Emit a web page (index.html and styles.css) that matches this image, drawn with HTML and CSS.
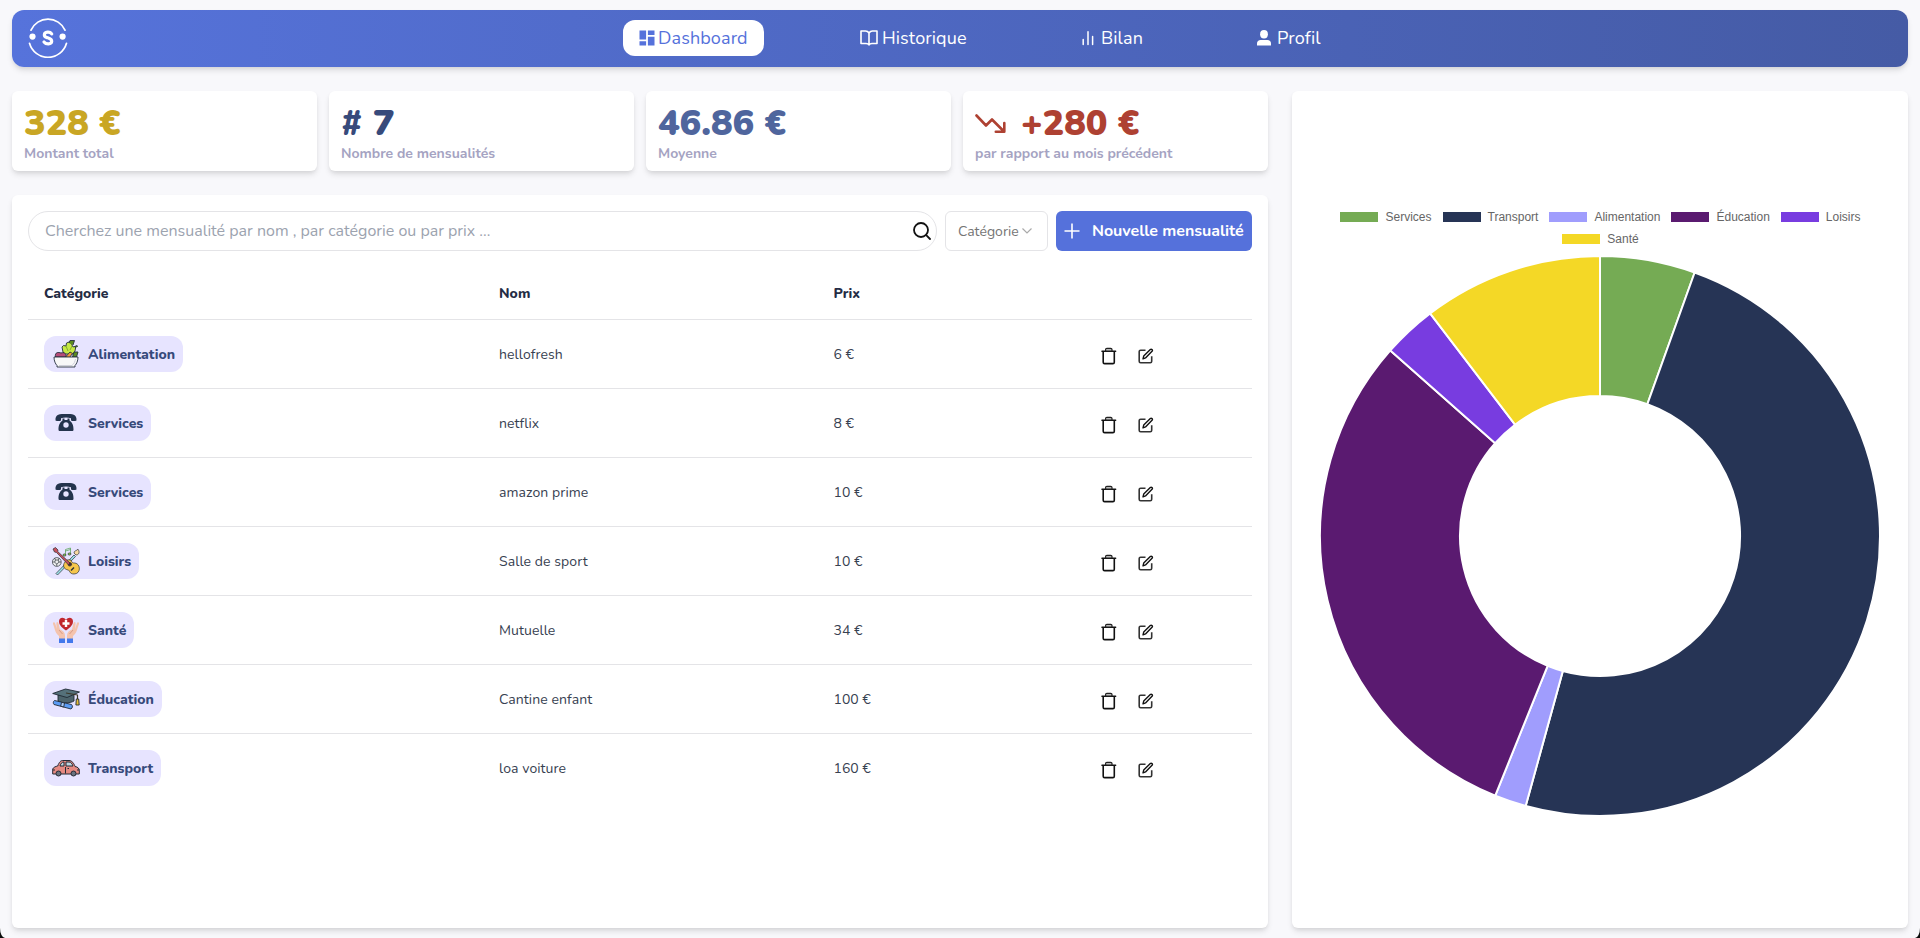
FILE: index.html
```html
<!DOCTYPE html>
<html lang="fr">
<head>
<meta charset="utf-8">
<title>Dashboard</title>
<link rel="stylesheet" href="styles.css">
</head>
<body>
<svg class="sprite" width="0" height="0">
  <symbol id="trash" viewBox="0 0 16 18"><path d="M2.200 4.500v10.700c0 .9.500 1.400 1.400 1.400h8.300c.9 0 1.400-.5 1.400-1.400V4.500M1 4.300h13.600" fill="none" stroke="currentColor" stroke-width="1.600" stroke-linecap="round"/><path d="M4.600 4V2.600c0-.8.5-1.300 1.300-1.300h3.800c.8 0 1.300.5 1.300 1.300V4z" fill="#bbb" stroke="#222" stroke-width="1.200"/></symbol>
  <symbol id="edit" viewBox="0 0 16 16"><path d="M7.500 2.200H2.600c-.8 0-1.400.6-1.400 1.400v9.700c0 .8.600 1.400 1.400 1.400h9.700c.8 0 1.400-.6 1.400-1.400V8.300" fill="none" stroke="#333" stroke-width="1.600"/><path d="M5 10.900l.7-2.800 6.600-6.500c.5-.5 1.200-.5 1.700 0s.5 1.200 0 1.700L7.500 9.900z" fill="none" stroke="currentColor" stroke-width="1.400" stroke-linejoin="round"/></symbol>
  <symbol id="phone" viewBox="0 0 28 28"><path d="M3.500 11.500C3 5 8 5 14 5s11 0 10.500 6.500c-1.500.7-4 .7-5.500 0V9.300c-3-1-7-1-10 0v2.200c-1.500.7-4 .7-5.500 0z" fill="#24344d"/><path d="M10.500 9.500h2V11h3V9.500h2v2c3.500 2.500 4 6 4 9 0 1-.5 1.500-1.500 1.500H8c-1 0-1.500-.5-1.500-1.500 0-3 .5-6.500 4-9z" fill="#24344d"/><circle cx="14" cy="16" r="2.700" fill="#e7e4ff"/></symbol>
</svg>

<header class="topbar">
  <svg class="logo" viewBox="0 0 40 40" fill="none" stroke="#fff" stroke-width="1.700" stroke-linecap="round"><path d="M3 12.200a18.600 18.600 0 0 1 34 0M1.500 25.300a19.200 19.200 0 0 0 37 0"/><circle cx="4.500" cy="18.600" r="3.100" fill="#fff" stroke="none"/><circle cx="34.600" cy="18.600" r="3.100" fill="#fff" stroke="none"/><path d="M23.700 15.900c-1-1.400-2.700-1.900-4.300-1.700-3.800.5-4 4.100-.8 5.200 2.100.7 5.300 1 5.100 3.900-.3 3.200-5.500 3.300-7.700.6" stroke-width="3.200"/></svg>
  <nav class="nav">
    <a class="nav-item active"><svg viewBox="0 0 16 16" fill="currentColor"><path d="M.5.500h6.600v9H.5zM8.900.500h6.600v4.500H8.900zM8.900 6.800h6.600v8.700H8.900zM.5 11.200h6.600v4.300H.5z"/></svg><span>Dashboard</span></a>
    <a class="nav-item history"><svg viewBox="0 0 18 16" fill="none" stroke="currentColor" stroke-width="1.600" stroke-linejoin="round"><path d="M9 3c-.8-1.300-2-2-3.500-2H1v12.500h5c1.500 0 2.500.5 3 1.500.5-1 1.500-1.500 3-1.500h5V1h-4.500C11 1 9.800 1.700 9 3zV15"/></svg><span>Historique</span></a>
    <a class="nav-item report"><svg viewBox="0 0 12 16" fill="none" stroke="currentColor" stroke-width="1.500" stroke-linecap="round"><path d="M1.200 9.500v5M6 1.800v12.700M10.600 6.500v8"/></svg><span>Bilan</span></a>
    <a class="nav-item profile"><svg viewBox="0 0 14 16" fill="currentColor"><ellipse cx="7" cy="4.300" rx="3.900" ry="4.200"/><path d="M0 15.500v-2.200c0-2 1.600-3.300 3.500-3.300h7c2 0 3.500 1.300 3.500 3.300v2.200z"/></svg><span>Profil</span></a>
  </nav>
</header>

<main class="layout">
  <div class="main-col">
    <section class="stats">
      <article class="card stat"><strong class="gold">328 €</strong><span>Montant total</span></article>
      <article class="card stat"><strong class="navy"># 7</strong><span>Nombre de mensualités</span></article>
      <article class="card stat"><strong class="blue">46.86 €</strong><span>Moyenne</span></article>
      <article class="card stat"><strong class="red"><svg viewBox="0 0 32 20" fill="none" stroke="currentColor" stroke-width="2.600" stroke-linecap="round" stroke-linejoin="round"><path d="M1.500 1.500l9.500 10L17 5.500l12 12M29.300 9v8.700h-8.500"/></svg>+280 €</strong><span>par rapport au mois précédent</span></article>
    </section>

    <section class="card panel">
      <div class="toolbar">
        <div class="search"><span>Cherchez une mensualité par nom , par catégorie ou par prix ...</span><svg viewBox="0 0 18 18" fill="none" stroke="#111" stroke-width="1.800" stroke-linecap="round"><circle cx="8" cy="8" r="7"/><path d="M13.200 13.200l3.800 3.800"/></svg></div>
        <div class="select"><span>Catégorie</span><svg viewBox="0 0 10 6" fill="none" stroke="#aaa" stroke-width="1.200"><path d="M.5.500L5 5 9.500.5"/></svg></div>
        <button class="add"><svg viewBox="0 0 16 16" stroke="#fff" stroke-width="1.600"><path d="M8 .5v15M.5 8h15"/></svg><span>Nouvelle mensualité</span></button>
      </div>
      <div class="table">
        <div class="row head"><span>Catégorie</span><span>Nom</span><span>Prix</span><span></span></div>
        <div class="row"><div><span class="tag"><svg viewBox="0 0 28 28" stroke="#26303f" stroke-width=".9" stroke-linejoin="round"><path d="M11 12l-1-5 1.500-1.500L14 6l.5-3L17 2l2 1 2 4 3-1-1 5-2 3h-8z" fill="#c5e845"/><path d="M17 3l1-2.500 4.500 0L21 5M23 8l1.500-2.500 1.500 1M22 12l4 0-1.500 5h-4z" fill="#5a8a20"/><path d="M14 6l2 5M20 6l-2 4" fill="none" stroke="#7ea52a"/><path d="M3.500 17c-1-5 3-5 5.500-4 3-1 5.500 0 5 4z" fill="#b64b78"/><path d="M13.500 17l4.500-5 2.500 1.500-3 4z" fill="#f39a3a"/><path d="M2 17h24c0 4-1.500 7-3 8.500V27H5v-1.500C3.500 24 2 21 2 17z" fill="#f8f8f8"/><path d="M7 25.500h13c2-1.500 3-4 3.500-6.500" fill="none" stroke="#c9cbd5"/></svg>Alimentation</span></div><span>hellofresh</span><span>6 €</span><div class="actions"><svg class="trash"><use href="#trash"/></svg><svg class="edit"><use href="#edit"/></svg></div></div>
        <div class="row"><div><span class="tag"><svg><use href="#phone"/></svg>Services</span></div><span>netflix</span><span>8 €</span><div class="actions"><svg class="trash"><use href="#trash"/></svg><svg class="edit"><use href="#edit"/></svg></div></div>
        <div class="row"><div><span class="tag"><svg><use href="#phone"/></svg>Services</span></div><span>amazon prime</span><span>10 €</span><div class="actions"><svg class="trash"><use href="#trash"/></svg><svg class="edit"><use href="#edit"/></svg></div></div>
        <div class="row"><div><span class="tag"><svg viewBox="0 0 28 28" stroke="#2b3038" stroke-width=".7" stroke-linejoin="round"><path d="M4 26.500L22 8l1.500 1.500L5.500 28z" fill="#9be0e8"/><path d="M22 6c0-2.500 2.500-2 4-3.800C28 5 27 8 24 8z" fill="#f8d9a0"/><circle cx="4.800" cy="15" r="4.400" fill="#eee"/><path d="M3.500 13h2.700l.8 2.300-2.200 1.600-2.200-1.600zM1 15h1.500M7 15h2M4.800 17v2M3.500 13l-1-2M6.200 13l1-2" fill="none"/><path d="M13.500 8V2.500l5-1.500v6M13.500 4l5-1.500" fill="none" stroke="#4c9d47"/><ellipse cx="12.500" cy="8" rx="1.500" ry="1.100" fill="#8bd04a"/><ellipse cx="17.500" cy="7" rx="1.500" ry="1.100" fill="#8bd04a"/><path d="M13 15c2-3 4-2 6-2 1 3 2 3 4 3 6 1 6 11-1 11-5 0-4-4-6-4-4-1-6-4-3-8z" fill="#f6c64b"/><circle cx="17.800" cy="17.300" r="1.800" fill="#4a3032"/><path d="M1 2l2.500-1.500 2.500 2.500-.3 1.500L18 16l-1.700 1.700L4.500 5.500 2.500 5z" fill="#c8505c"/><path d="M19 23.500l3-3" stroke-width="1.400"/></svg>Loisirs</span></div><span>Salle de sport</span><span>10 €</span><div class="actions"><svg class="trash"><use href="#trash"/></svg><svg class="edit"><use href="#edit"/></svg></div></div>
        <div class="row"><div><span class="tag"><svg viewBox="0 0 28 28"><path d="M14 14.500C9 11 7 8.500 7 5.500 7 1 12 .8 14 4c2-3.200 7-3 7 1.500 0 3-2 5.500-7 9z" fill="#c1272d"/><path d="M12.800 4h2.400v2.300h2.300v2.400h-2.300V11h-2.400V8.700h-2.300V6.300h2.300z" fill="#fff"/><path d="M7 23v-3C3 17 3 13 1 8c-.4-1.600 1.400-2.400 2-1l2 6C4.500 10 4 6.500 5 6c1.500-.5 2 3.500 3 7.500 3 1 5 3 5 6V23z" fill="#f4c3ad"/><path d="M15 23v-3.500c0-3 2-5 5-6 1-4 1.500-8 3-7.500 1 .5.500 4 0 7l2-6c.6-1.400 2.400-.6 2 1-2 5-2 9-6 12v3z" fill="#f4c3ad"/><path d="M7 14l3.500 4M21 14l-3.500 4" stroke="#d99c87" stroke-width="1" fill="none"/><path d="M7 22.500h6V27H7zM15 22.500h6V27h-6z" fill="#4379ec"/></svg>Santé</span></div><span>Mutuelle</span><span>34 €</span><div class="actions"><svg class="trash"><use href="#trash"/></svg><svg class="edit"><use href="#edit"/></svg></div></div>
        <div class="row"><div><span class="tag"><svg viewBox="0 0 28 28" stroke="#202a34" stroke-width=".9" stroke-linejoin="round"><path d="M6 10v6c3 2.500 12 2.500 16 0V9z" fill="#4d646c"/><path d="M.7 8.500L13.500 4l14 3L15 12.500z" fill="#55717a"/><path d="M14 8l11.500 2v5" fill="none" stroke="#3b3728" stroke-width="1.200"/><path d="M24.300 14h2.400l.5 6h-3.300z" fill="#e5bd38"/><path d="M2.500 15.500l17 4c1.500 1.500 1 3.500-.5 4.500l-17-4.500c-1-1-1-3 .5-4z" fill="#5b9cf5"/><path d="M9.500 17.300l3 .7-.8 4-3-.8z" fill="#a9cafa"/></svg>Éducation</span></div><span>Cantine enfant</span><span>100 €</span><div class="actions"><svg class="trash"><use href="#trash"/></svg><svg class="edit"><use href="#edit"/></svg></div></div>
        <div class="row"><div><span class="tag"><svg viewBox="0 0 28 28" stroke="#252a34" stroke-width="1" stroke-linejoin="round"><path d="M.7 19v-4c1-2 3-2.500 5-3 1.500-4 3-5.500 5-5.500h6.300c3 0 5 3 6 6 3 .5 4.300 2 4.300 4V20H.7z" fill="#e58a82"/><path d="M8 12c.7-2.500 2-4 4-4v4zM14 8h3c2 0 3 1.500 4 4h-7z" fill="#bdd5e0"/><path d="M1 16h2M25 16h2.500M13.500 13v6.500M15.500 14.500H17" fill="none"/><circle cx="6.500" cy="19.500" r="2.500" fill="#69727e"/><circle cx="21.500" cy="19.500" r="2.500" fill="#69727e"/></svg>Transport</span></div><span>loa voiture</span><span>160 €</span><div class="actions"><svg class="trash"><use href="#trash"/></svg><svg class="edit"><use href="#edit"/></svg></div></div>
      </div>
    </section>
  </div>

  <aside class="card chart">
    <div class="legend">
      <span><i class="services"></i>Services</span><span><i class="transport"></i>Transport</span><span><i class="food"></i>Alimentation</span><span><i class="education"></i>Éducation</span><span><i class="leisure"></i>Loisirs</span><span><i class="health"></i>Santé</span>
    </div>
    <svg class="donut" viewBox="-281 -281 562 562" stroke="#fff" stroke-width="2" stroke-linejoin="bevel">
      <path fill="#75ab54" d="M0 -280A280 280 0 0 1 94.660 -263.510L47.330 -131.760A140 140 0 0 0 0 -140Z"/>
      <path fill="#263455" d="M94.660 -263.510A280 280 0 0 1 -74.320 269.960L-37.160 134.980A140 140 0 0 0 47.330 -131.760Z"/>
      <path fill="#a09dfd" d="M-74.320 269.960A280 280 0 0 1 -104.760 259.660L-52.380 129.830A140 140 0 0 0 -37.160 134.980Z"/>
      <path fill="#5a1a70" d="M-104.760 259.660A280 280 0 0 1 -209.670 -185.570L-104.830 -92.780A140 140 0 0 0 -52.380 129.830Z"/>
      <path fill="#783ce0" d="M-209.670 -185.570A280 280 0 0 1 -169.900 -222.570L-84.950 -111.280A140 140 0 0 0 -104.830 -92.780Z"/>
      <path fill="#f4d826" d="M-169.900 -222.570A280 280 0 0 1 0 -280V-140A140 140 0 0 0 -84.950 -111.280Z"/>
    </svg>
  </aside>
</main>
</body>
</html>
```
FILE: styles.css
```css
* { box-sizing: border-box; }
html { background: #0b0d0c; height: 100%; }
body {
  margin: 0; height: 938px; padding: 10px 12px; overflow: hidden;
  background: #f8f8fb; border-radius: 0 0 5px 5px / 0 0 10px 10px;
  font-family: Nunito, Lato, "Noto Sans", sans-serif; font-size: 14px; color: #374151;
  display: flex; flex-direction: column; gap: 24px;
}
svg { display: block; flex: none; }
.sprite { position: absolute; }
.topbar {
  height: 57px; flex: none; border-radius: 12px; padding: 0 16px 1px;
  display: flex; align-items: center;
  background: linear-gradient(90deg, #5673db, #455ba5);
  box-shadow: 0 4px 6px -1px rgba(0,0,0,.12), 0 2px 4px -1px rgba(0,0,0,.06);
}
.logo { width: 40px; height: 40px; }
.nav { display: flex; align-items: center; margin-left: 555px; color: #fff; font-size: 18px; letter-spacing: .12px; }
.nav-item { height: 36px; display: flex; align-items: center; gap: 4px; }
.nav-item svg { width: 16px; height: 16px; }
.nav-item.active { width: 141px; padding-left: 16px; gap: 3px; background: #fff; color: #5571db; border-radius: 12px; }
.history { margin-left: 96px; width: 107px; }
.nav-item.history svg { width: 18px; }
.report { margin-left: 115px; width: 61px; }
.nav-item.report { gap: 7px; }
.nav-item.report svg { width: 12px; }
.profile { margin-left: 114px; }
.nav-item.profile { gap: 6px; }
.nav-item.profile svg { width: 14px; }

.layout { flex: 1; display: grid; grid-template-columns: 1256px 616px; gap: 24px; min-height: 0; }
.main-col { display: flex; flex-direction: column; gap: 24px; }
.card { background: #fff; border-radius: 6px; box-shadow: 0 4px 6px -1px rgba(0,0,0,.12), 0 2px 4px -1px rgba(0,0,0,.06); }
.stats { display: grid; grid-template-columns: repeat(4, 1fr); gap: 12px; }
.stat { height: 80px; padding: 13px 12px 7px; display: flex; flex-direction: column; }
.stat strong { font-size: 36px; line-height: 40px; font-weight: 900; display: flex; align-items: center; gap: 14px; }
.stat strong svg { width: 32px; height: 20px; }
.stat span { font-weight: 700; line-height: 20px; color: #a5a3c2; }
.gold { color: #c9a624; }
.navy { color: #374a7b; }
.blue { color: #4f659d; }
.red { color: #ae4132; }

.panel { flex: 1; padding: 16px; }
.toolbar { display: flex; gap: 8px; height: 40px; }
.search { width: 909px; border: 1px solid #e4e4e7; border-radius: 20px; padding: 0 5px 0 16px; display: flex; align-items: center; justify-content: space-between; font-size: 16px; color: #9ca3af; }
.search svg { width: 18px; height: 18px; }
.select { width: 103px; border: 1px solid #e4e4e7; border-radius: 6px; padding: 0 15px 0 12px; display: flex; align-items: center; justify-content: space-between; color: #757575; }
.select svg { width: 10px; height: 6px; }
.add { width: 196px; border: 0; border-radius: 6px; background: #5571db; color: #fff; font: 700 16px Nunito, Lato, sans-serif; letter-spacing: -.03px; padding: 0 8px; display: flex; align-items: center; gap: 12px; white-space: nowrap; }
.add svg { width: 16px; height: 16px; }
.row { height: 69px; padding: 0 16px; border-top: 1px solid #e4e4e7; display: grid; grid-template-columns: 455px 334.500px 267.500px 1fr; align-items: center; }
.row > span:nth-child(2) { letter-spacing: .08px; }
.row.head { border: 0; height: 68px; padding-top: 16px; font-weight: 800; color: #242c44; }
.tag { display: inline-flex; vertical-align: middle; align-items: center; gap: 8px; height: 36px; padding: 0 8px; border-radius: 12px; background: #e7e4ff; color: #374a7b; font-weight: 800; }
.tag svg { width: 28px; height: 28px; }
.actions { display: flex; align-items: center; gap: 21px; padding-top: 3px; color: #111; }
.trash { width: 16px; height: 18px; }
.edit { width: 16px; height: 16px; }

.chart { padding-top: 115px; display: flex; flex-direction: column; align-items: center; }
.legend { width: 560px; padding-left: 1px; display: flex; flex-wrap: wrap; justify-content: center; column-gap: 11px; font: 12px/22px "Liberation Sans", sans-serif; color: #666; }
.legend span { display: flex; align-items: center; gap: 7px; }
.legend i { width: 38px; height: 10px; }
.services { background: #75ab54; }
.transport { background: #263455; }
.food { background: #a09dfd; }
.education { background: #5a1a70; }
.leisure { background: #783ce0; }
.health { background: #f4d826; }
.donut { width: 562px; height: 562px; margin-top: 5px; }
```
